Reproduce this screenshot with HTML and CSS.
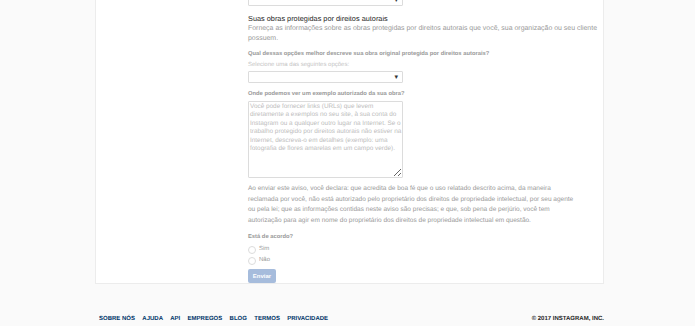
FILE: index.html
```html
<!DOCTYPE html>
<html lang="pt">
<head>
<meta charset="utf-8">
<title>Instagram - Direitos autorais</title>
<link rel="stylesheet" href="styles.css">
</head>
<body>
<main class="page">
  <section class="card">
    <div class="form">
      <div class="select select-top"><span class="arrow">▾</span></div>
      <h2 class="heading">Suas obras protegidas por direitos autorais</h2>
      <p class="desc">Forneça as informações sobre as obras protegidas por direitos autorais que você, sua organização ou seu cliente possuem.</p>
      <p class="label label-1">Qual dessas opções melhor descreve sua obra original protegida por direitos autorais?</p>
      <p class="hint">Selecione uma das seguintes opções:</p>
      <div class="select"><span class="arrow">▾</span></div>
      <p class="label label-2">Onde podemos ver um exemplo autorizado da sua obra?</p>
      <textarea class="area" placeholder="Você pode fornecer links (URLs) que levem diretamente a exemplos no seu site, à sua conta do Instagram ou a qualquer outro lugar na Internet. Se o trabalho protegido por direitos autorais não estiver na Internet, descreva-o em detalhes (exemplo: uma fotografia de flores amarelas em um campo verde)."></textarea>
      <p class="legal">Ao enviar este aviso, você declara: que acredita de boa fé que o uso relatado descrito acima, da maneira reclamada por você, não está autorizado pelo proprietário dos direitos de propriedade intelectual, por seu agente ou pela lei; que as informações contidas neste aviso são precisas; e que, sob pena de perjúrio, você tem autorização para agir em nome do proprietário dos direitos de propriedade intelectual em questão.</p>
      <p class="label label-3">Está de acordo?</p>
      <label class="radio radio-first"><span class="circle"></span>Sim</label>
      <label class="radio"><span class="circle"></span>Não</label>
      <button class="submit" type="button">Enviar</button>
    </div>
  </section>
  <footer class="footer">
    <nav class="links">
      <a href="#">SOBRE NÓS</a>
      <a href="#">AJUDA</a>
      <a href="#">API</a>
      <a href="#">EMPREGOS</a>
      <a href="#">BLOG</a>
      <a href="#">TERMOS</a>
      <a href="#">PRIVACIDADE</a>
    </nav>
    <span class="copy">© 2017 INSTAGRAM, INC.</span>
  </footer>
</main>
</body>
</html>
```
FILE: styles.css
```css
html, body {
  margin: 0;
  padding: 0;
  background: #fafafa;
  font-family: "Liberation Sans", Arial, sans-serif;
  text-rendering: geometricPrecision;
}
.page {
  width: 509px;
  margin: 0 0 0 95px;
  display: flex;
  flex-direction: column;
}
.card {
  margin-top: -6px;
  background: #fff;
  border: 1px solid #ececec;
  border-top: none;
  padding: 0 0 0 152px;
  height: 290px;
  box-sizing: border-box;
}
.form {
  display: flex;
  flex-direction: column;
  align-items: flex-start;
}
.select {
  position: relative;
  width: 155px;
  height: 12px;
  border: 1px solid #dcdcdc;
  box-sizing: border-box;
  border-radius: 1px;
  background: #fff;
}
.arrow {
  position: absolute;
  right: 4px;
  top: 1px;
  font-size: 7px;
  line-height: 9px;
  color: #333;
}
.heading {
  margin: 8px 0 0;
  font-size: 7.34px;
  font-weight: normal;
  line-height: 10px;
  color: #262626;
}
.desc {
  margin: 0;
  font-size: 6.94px;
  line-height: 10px;
  color: #999;
  width: 356px;
}
.label {
  margin: 6px 0 0;
  font-size: 5.8px;
  font-weight: bold;
  line-height: 8px;
  color: #999;
}
.hint {
  margin: 3px 0 2px;
  font-size: 6px;
  line-height: 8px;
  color: #c4c4c4;
}
.label-2 {
  margin-top: 7px;
}
.area {
  margin: 3px 0 0;
  width: 155px;
  height: 77px;
  box-sizing: border-box;
  border: 1px solid #dcdcdc;
  border-radius: 1px;
  padding: 1px 0 1px 1px;
  font-family: "Liberation Sans", Arial, sans-serif;
  text-rendering: geometricPrecision;
  font-size: 6.4px;
  line-height: 8.4px;
  resize: vertical;
  overflow: hidden;
}
.area::placeholder {
  color: #bdbdbd;
}
.legal {
  margin: 6px 0 0;
  width: 328px;
  font-size: 6.5px;
  line-height: 10.6px;
  color: #999;
}
.label-3 {
  margin-top: 7px;
}
.radio {
  display: flex;
  align-items: center;
  gap: 3px;
  font-size: 6px;
  line-height: 11px;
  color: #999;
}
.radio-first {
  margin-top: 3px;
}
.circle {
  width: 8px;
  height: 8px;
  border: 1px solid #dcdcdc;
  border-radius: 50%;
  box-sizing: border-box;
  background: #fff;
}
.submit {
  margin-top: 3px;
  width: 28px;
  height: 14px;
  padding: 0;
  border: none;
  border-radius: 2px;
  background: #a6bcdc;
  color: #fff;
  font-family: "Liberation Sans", Arial, sans-serif;
  font-size: 6px;
  font-weight: bold;
}
.footer {
  display: flex;
  justify-content: space-between;
  align-items: center;
  padding: 31px 0 0 4px;
}
.links {
  display: flex;
  gap: 7.3px;
}
.links a {
  color: #003569;
  text-decoration: none;
  font-size: 6px;
  font-weight: bold;
  line-height: 8px;
}
.copy {
  color: #262626;
  font-size: 6px;
  font-weight: bold;
  line-height: 8px;
}
```
